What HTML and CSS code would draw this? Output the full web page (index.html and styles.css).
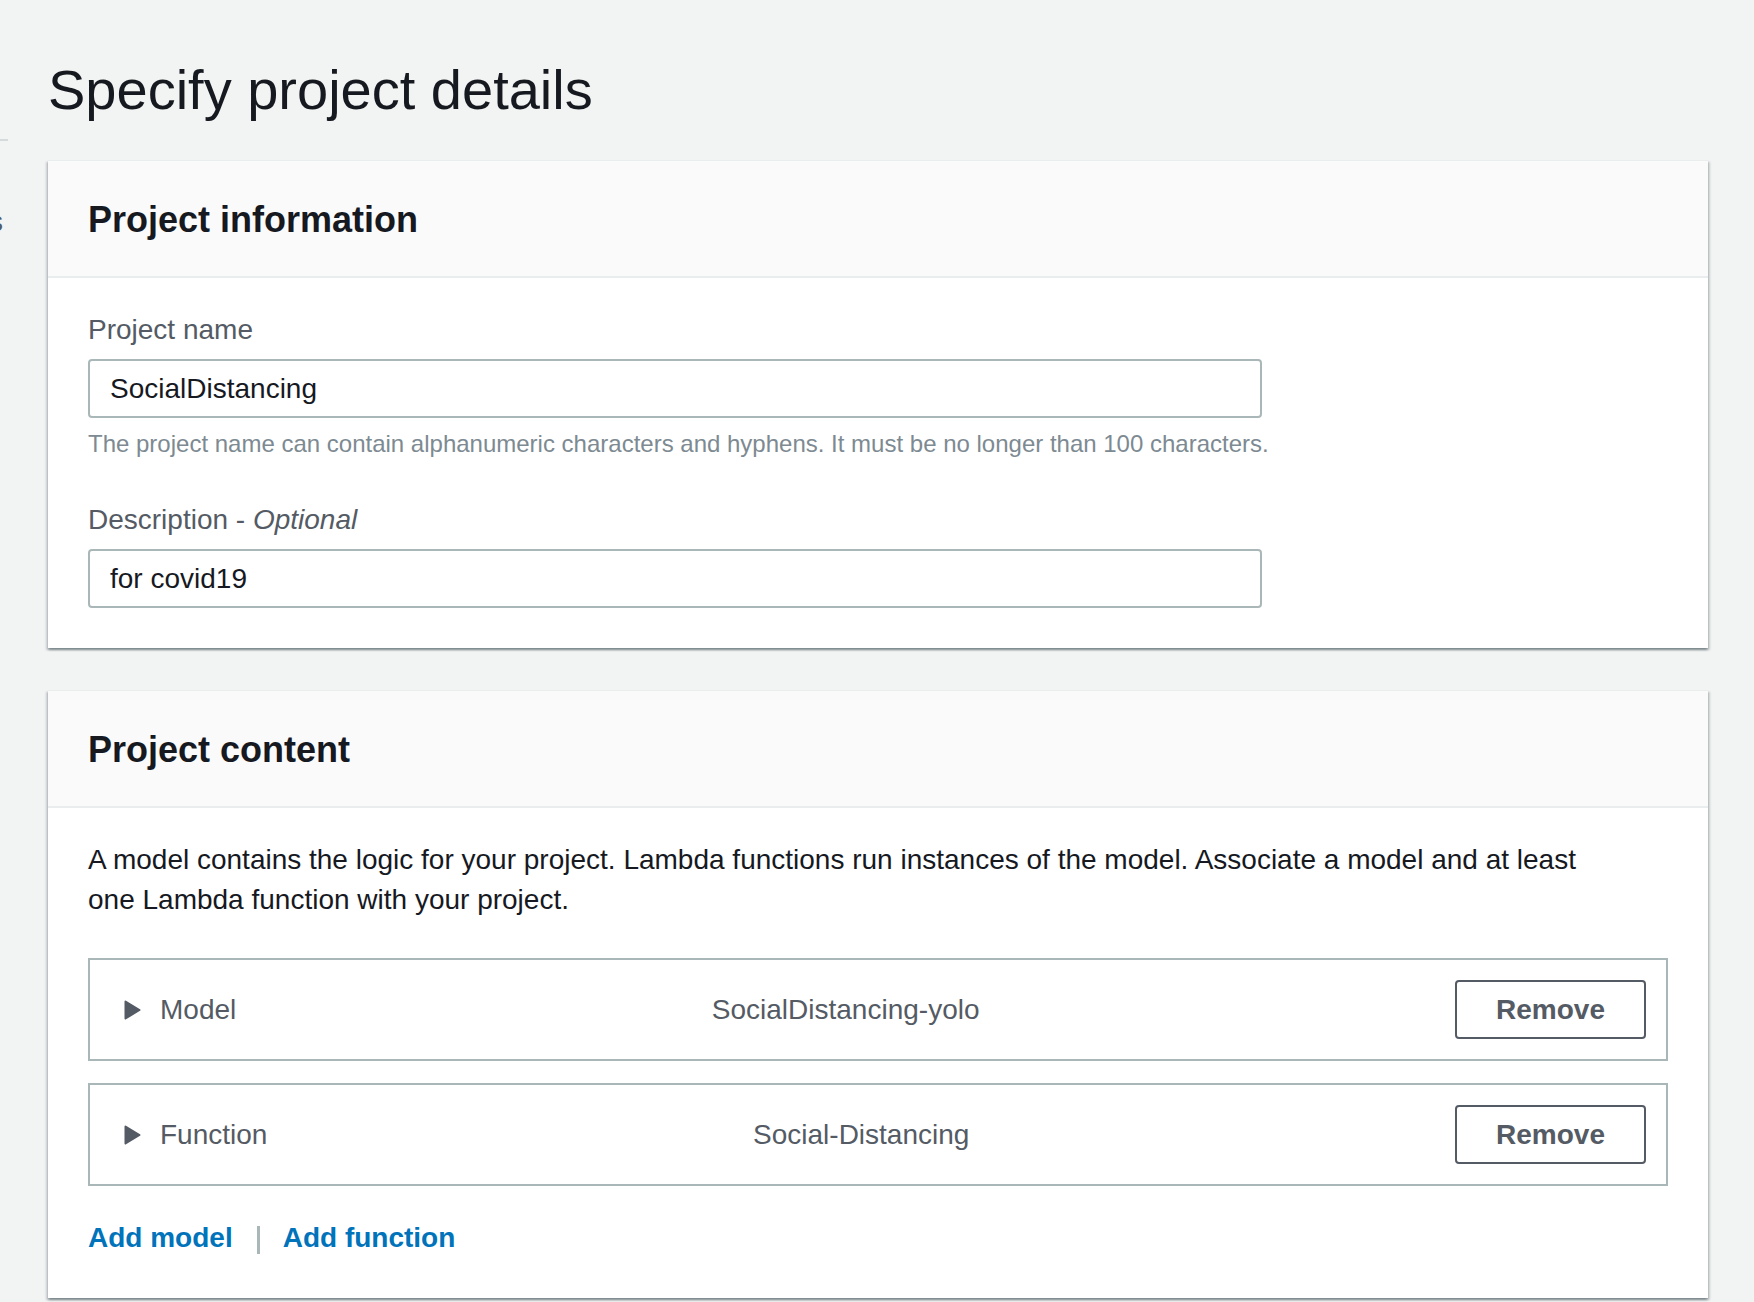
FILE: index.html
```html
<!DOCTYPE html>
<html lang="en">
<head>
<meta charset="utf-8">
<title>Specify project details</title>
<link rel="stylesheet" href="styles.css">
</head>
<body>
<aside class="sidenav">
  <div class="sidenav-divider"></div>
  <div class="sidenav-item">Projects</div>
</aside>
<main class="main">
  <h1 class="page-title">Specify project details</h1>

  <section class="card">
    <header class="card-header"><h2>Project information</h2></header>
    <div class="card-body">
      <label class="field-label" for="pname">Project name</label>
      <input class="text-input" id="pname" type="text" value="SocialDistancing">
      <p class="field-hint">The project name can contain alphanumeric characters and hyphens. It must be no longer than 100 characters.</p>
      <label class="field-label field-label-second" for="pdesc">Description - <i>Optional</i></label>
      <input class="text-input" id="pdesc" type="text" value="for covid19">
    </div>
  </section>

  <section class="card card-second">
    <header class="card-header"><h2>Project content</h2></header>
    <div class="card-body">
      <p class="intro">A model contains the logic for your project. Lambda functions run instances of the model. Associate a model and at least<br>one Lambda function with your project.</p>

      <div class="item-row">
        <svg class="caret" width="17" height="20" viewBox="0 0 17 20"><polygon points="1.5,1.5 15.5,10 1.5,18.5" fill="#545b64" stroke="#545b64" stroke-width="2" stroke-linejoin="round"/></svg>
        <span class="item-label">Model</span>
        <span class="item-value">SocialDistancing-yolo</span>
        <button class="btn" type="button">Remove</button>
      </div>

      <div class="item-row item-row-second">
        <svg class="caret" width="17" height="20" viewBox="0 0 17 20"><polygon points="1.5,1.5 15.5,10 1.5,18.5" fill="#545b64" stroke="#545b64" stroke-width="2" stroke-linejoin="round"/></svg>
        <span class="item-label">Function</span>
        <span class="item-value">Social-Distancing</span>
        <button class="btn" type="button">Remove</button>
      </div>

      <div class="links">
        <a class="link" href="#">Add model</a>
        <span class="link-sep"></span>
        <a class="link" href="#">Add function</a>
      </div>
    </div>
  </section>
</main>
</body>
</html>
```

FILE: styles.css
```css
html, body {
  margin: 0;
  padding: 0;
}

body {
  background: #f2f3f3;
  font-family: "Liberation Sans", Arial, sans-serif;
  color: #16191f;
  display: flex;
  align-items: flex-start;
  min-height: 1302px;
  overflow: hidden;
}

.sidenav {
  width: 8px;
  flex: 0 0 8px;
  overflow: hidden;
  padding-top: 139px;
}

.sidenav-divider {
  height: 2px;
  background: #d5dbdb;
}

.sidenav-item {
  direction: rtl;
  white-space: nowrap;
  padding-right: 5px;
  margin-top: 61px;
  font-size: 28px;
  line-height: 40px;
  color: #545b64;
}

.main {
  flex: 1;
  padding: 54px 46px 0 40px;
}

.page-title {
  margin: 0 0 34px 0;
  font-size: 56px;
  line-height: 72px;
  font-weight: normal;
  color: #16191f;
}

.card {
  background: #fff;
  border-top: 1px solid #eaeded;
  box-shadow: 0 2px 2px 0 rgba(0, 28, 36, 0.3), 2px 2px 2px 0 rgba(0, 28, 36, 0.15), -2px 2px 2px 0 rgba(0, 28, 36, 0.15);
}

.card-second {
  margin-top: 42px;
}

.card-header {
  background: #fafafa;
  padding: 37px 40px 34px 40px;
  border-bottom: 2px solid #eaeded;
}

.card-header h2 {
  margin: 0;
  font-size: 36px;
  line-height: 44px;
  font-weight: bold;
  color: #16191f;
}

.card-body {
  padding: 32px 40px 40px 40px;
}

.field-label {
  display: block;
  font-size: 28px;
  line-height: 40px;
  color: #545b64;
  margin-bottom: 9px;
}

.field-label i {
  font-style: italic;
}

.field-label-second {
  margin-top: 40px;
}

.text-input {
  display: block;
  box-sizing: border-box;
  width: 1174px;
  height: 59px;
  margin: 0;
  padding: 0 20px;
  border: 2px solid #aab7b8;
  border-radius: 4px;
  background: #fff;
  font-family: "Liberation Sans", Arial, sans-serif;
  font-size: 28px;
  color: #16191f;
  outline: none;
}

.field-hint {
  margin: 10px 0 0 0;
  font-size: 24px;
  line-height: 32px;
  color: #7d8a92;
}

.intro {
  margin: 0;
  font-size: 28px;
  line-height: 40px;
  color: #16191f;
}

.item-row {
  display: flex;
  align-items: center;
  margin-top: 38px;
  padding: 20px 20px 20px 34px;
  border: 2px solid #aab7b8;
}

.item-row-second {
  margin-top: 22px;
}

.caret {
  flex: 0 0 17px;
  margin-right: 19px;
}

.item-label,
.item-value {
  font-size: 28px;
  line-height: 40px;
  color: #545b64;
}

.item-value {
  flex: 1;
  text-align: center;
}

.btn {
  box-sizing: border-box;
  height: 59px;
  padding: 0 39px;
  border: 2px solid #545b64;
  border-radius: 4px;
  background: #fff;
  font-family: "Liberation Sans", Arial, sans-serif;
  font-size: 28px;
  font-weight: bold;
  color: #545b64;
}

.links {
  display: flex;
  align-items: center;
  margin-top: 32px;
  font-size: 28px;
  line-height: 40px;
}

.link {
  color: #0073bb;
  font-weight: bold;
  text-decoration: none;
}

.link-sep {
  display: inline-block;
  width: 3px;
  height: 28px;
  margin: 4px 23px 0 24px;
  background: #aab7b8;
}
```
